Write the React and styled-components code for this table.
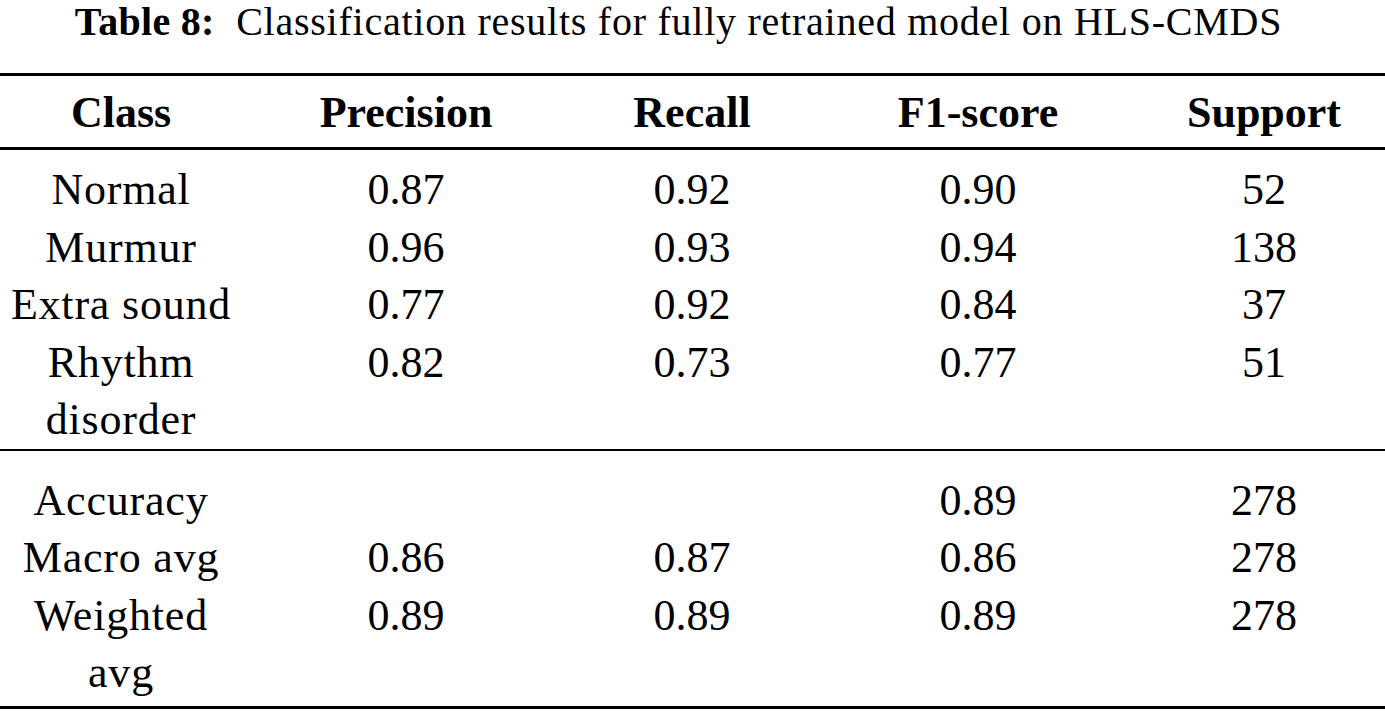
import React from 'react';
import styled, { createGlobalStyle } from 'styled-components';

const GlobalStyle = createGlobalStyle`
  * {
    margin: 0;
    padding: 0;
    box-sizing: border-box;
  }
  body {
    background: #ffffff;
    color: #000000;
    font-family: 'Liberation Serif', 'Times New Roman', serif;
    overflow: hidden;
  }
`;

const Page = styled.div`
  width: 1385px;
  height: 711px;
  overflow: hidden;
`;

const Caption = styled.div`
  height: 73px;
  padding-right: 28px;
  text-align: center;
  font-size: 40px;
  line-height: 44px;
  letter-spacing: 0.75px;
  white-space: pre;

  b {
    font-weight: 700;
    letter-spacing: 0.3px;
  }
`;

const Rule = styled.div`
  height: ${({ $thick }) => ($thick ? 3 : 2)}px;
  background: #000;
  width: 100%;
`;

const Section = styled.div`
  padding: ${({ $pad }) => $pad};
`;

// 5 columns; first and last are padded so their text centres where the source puts it
const Row = styled.div`
  display: grid;
  grid-template-columns: 263px repeat(3, 286px) 1fr;
  align-items: start;

  & > *:nth-child(1) {
    padding-right: 21px;
  }
  & > *:nth-child(5) {
    padding-left: 22px;
  }
`;

const HeadRow = styled(Row)`
  height: 71px;
  padding-top: 3px;
  align-items: center;
`;

const HeadCell = styled.div`
  text-align: center;
  font-weight: 700;
  font-size: 44px;
  line-height: 48px;
`;

const Cell = styled.div`
  text-align: center;
  font-size: 44px;
  line-height: 57.5px;
  letter-spacing: ${({ $label }) => ($label ? '0.8px' : '0')};
`;

const headers = ['Class', 'Precision', 'Recall', 'F1-score', 'Support'];

const classRows = [
  [['Normal'], '0.87', '0.92', '0.90', '52'],
  [['Murmur'], '0.96', '0.93', '0.94', '138'],
  [['Extra sound'], '0.77', '0.92', '0.84', '37'],
  [['Rhythm', 'disorder'], '0.82', '0.73', '0.77', '51'],
];

const summaryRows = [
  [['Accuracy'], '', '', '0.89', '278'],
  [['Macro avg'], '0.86', '0.87', '0.86', '278'],
  [['Weighted', 'avg'], '0.89', '0.89', '0.89', '278'],
];

const DataRow = ({ row }) => {
  const [label, ...values] = row;
  return (
    <Row>
      <Cell $label>
        {label.map((line, i) => (
          <div key={i}>{line}</div>
        ))}
      </Cell>
      {values.map((v, i) => (
        <Cell key={i}>{v}</Cell>
      ))}
    </Row>
  );
};

const App = () => (
  <>
    <GlobalStyle />
    <Page>
      <Caption>
        <b>Table 8:</b>{'  '}Classification results for fully retrained model on HLS-CMDS
      </Caption>
      <Rule $thick />
      <HeadRow>
        {headers.map((h) => (
          <HeadCell key={h}>{h}</HeadCell>
        ))}
      </HeadRow>
      <Rule $thick />
      <Section $pad="11px 0 0">
        {classRows.map((r, i) => (
          <DataRow key={i} row={r} />
        ))}
      </Section>
      <Rule />
      <Section $pad="21px 0 4px">
        {summaryRows.map((r, i) => (
          <DataRow key={i} row={r} />
        ))}
      </Section>
      <Rule $thick />
    </Page>
  </>
);

export default App;
